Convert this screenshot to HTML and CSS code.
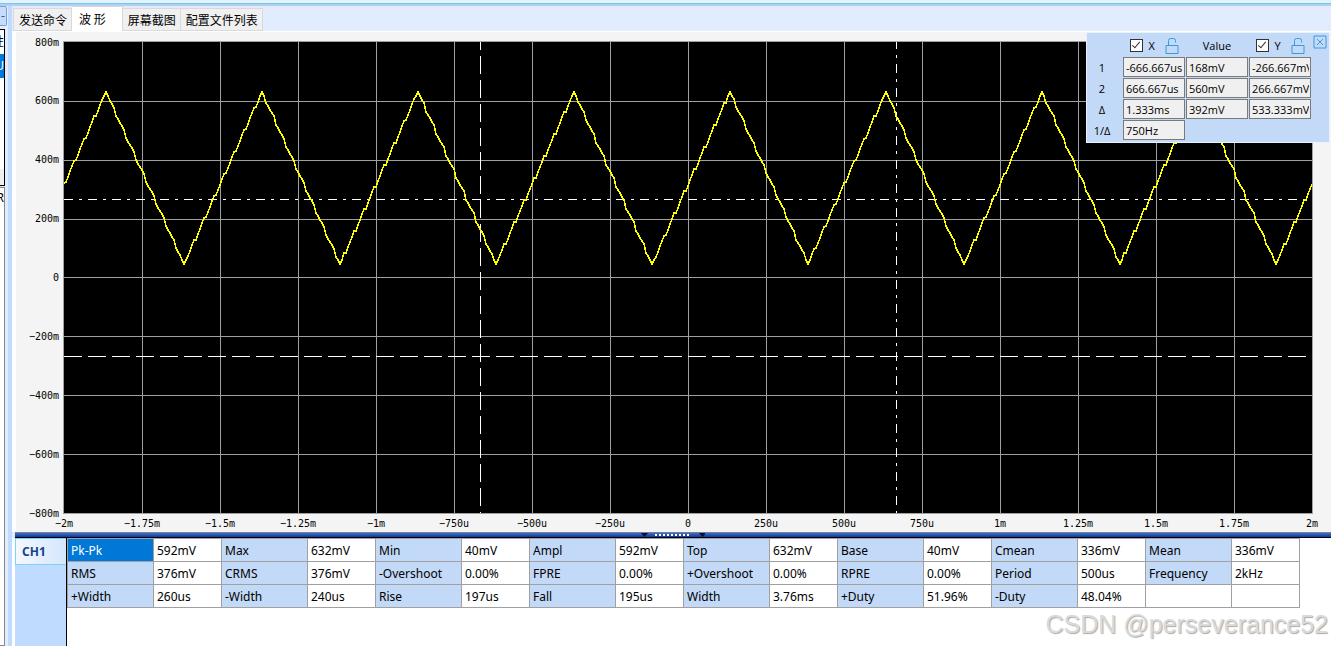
FILE: index.html
```html
<!DOCTYPE html>
<html lang="zh-CN">
<head>
    <meta charset="UTF-8">
    <title>波形</title>
    <link rel="stylesheet" href="styles.css">
</head>
<body>
<div class="topline"></div>
<div class="workspace">
    <aside class="sidebar">
        <button class="side-button" aria-label="-">-</button>
        <div class="side-list">
            <div class="side-item">性</div>
            <div class="side-item selected">U</div>
            <div class="side-space"></div>
        </div>
        <div class="side-log">R</div>
    </aside>
    <main>
        <nav class="tabs">
            <button>发送命令</button>
            <button class="active">波 形</button>
            <button>屏幕截图</button>
            <button>配置文件列表</button>
        </nav>
        <section class="scope">
            <div class="y-axis">
                <span>800m</span>
                <span>600m</span>
                <span>400m</span>
                <span>200m</span>
                <span>0</span>
                <span>−200m</span>
                <span>−400m</span>
                <span>−600m</span>
                <span>−800m</span>
            </div>
            <svg class="plot" viewBox="0 0 1248 471" preserveAspectRatio="none">
                <path class="grid" d="M78.5 0V471M156.5 0V471M234.5 0V471M312.5 0V471M390.5 0V471M468.5 0V471M546.5 0V471M624.5 0V471M702.5 0V471M780.5 0V471M858.5 0V471M936.5 0V471M1014.5 0V471M1092.5 0V471M1170.5 0V471M0 59.5H1248M0 118.5H1248M0 177.5H1248M0 235.5H1248M0 294.5H1248M0 353.5H1248M0 412.5H1248"/>
                <path class="cursor dash" d="M416.5 -10V471M0 314.5H1248"/>
                <path class="cursor dash-dot" d="M832.5 -2V471M0 157.5H1248"/>
                <polyline class="wave"/>
            </svg>
            <div class="x-axis">
                <span>−2m</span>
                <span>−1.75m</span>
                <span>−1.5m</span>
                <span>−1.25m</span>
                <span>−1m</span>
                <span>−750u</span>
                <span>−500u</span>
                <span>−250u</span>
                <span>0</span>
                <span>250u</span>
                <span>500u</span>
                <span>750u</span>
                <span>1m</span>
                <span>1.25m</span>
                <span>1.5m</span>
                <span>1.75m</span>
                <span>2m</span>
            </div>
        </section>
        <div class="splitter">
            <svg width="64" height="6" viewBox="0 0 64 6">
                <path d="M0 0H7L3.5 4ZM58 0H65L61.5 4Z" fill="#001040"/>
                <path d="M14 2H50" stroke="#fff" stroke-width="2" stroke-dasharray="2 2"/>
            </svg>
        </div>
        <section class="measure">
            <div class="channels">
                <button>CH1</button>
            </div>
            <div class="results">
                <table>
                    <tr>
                        <th class="selected">Pk-Pk</th><td>592mV</td>
                        <th>Max</th><td>632mV</td>
                        <th>Min</th><td>40mV</td>
                        <th>Ampl</th><td>592mV</td>
                        <th>Top</th><td>632mV</td>
                        <th>Base</th><td>40mV</td>
                        <th>Cmean</th><td>336mV</td>
                        <th>Mean</th><td>336mV</td>
                    </tr>
                    <tr>
                        <th>RMS</th><td>376mV</td>
                        <th>CRMS</th><td>376mV</td>
                        <th>-Overshoot</th><td>0.00%</td>
                        <th>FPRE</th><td>0.00%</td>
                        <th>+Overshoot</th><td>0.00%</td>
                        <th>RPRE</th><td>0.00%</td>
                        <th>Period</th><td>500us</td>
                        <th>Frequency</th><td>2kHz</td>
                    </tr>
                    <tr>
                        <th>+Width</th><td>260us</td>
                        <th>-Width</th><td>240us</td>
                        <th>Rise</th><td>197us</td>
                        <th>Fall</th><td>195us</td>
                        <th>Width</th><td>3.76ms</td>
                        <th>+Duty</th><td>51.96%</td>
                        <th>-Duty</th><td>48.04%</td>
                        <td></td><td></td>
                    </tr>
                </table>
            </div>
        </section>
    </main>
</div>

<div class="cursors">
    <span></span>
    <div class="head">
        <input type="checkbox" id="cursor-x" checked>
        <label for="cursor-x">X</label>
        <svg width="14" height="18" viewBox="0 0 14 18"><path d="M1 8.5H13V16.5H1ZM3.5 8.5V3.5Q3.5 1.5 5.5 1.5H8.5Q10.5 1.5 10.5 3.5V5.5"/></svg>
    </div>
    <div class="head">Value</div>
    <div class="head">
        <input type="checkbox" id="cursor-y" checked>
        <label for="cursor-y">Y</label>
        <svg width="14" height="18" viewBox="0 0 14 18"><path d="M1 8.5H13V16.5H1ZM3.5 8.5V3.5Q3.5 1.5 5.5 1.5H8.5Q10.5 1.5 10.5 3.5V5.5"/></svg>
    </div>
    <span class="name">1</span>
    <input type="text" aria-label="X1" value="-666.667us">
    <input type="text" aria-label="Value 1" value="168mV">
    <input type="text" aria-label="Y1" value="-266.667mV">
    <span class="name">2</span>
    <input type="text" aria-label="X2" value="666.667us">
    <input type="text" aria-label="Value 2" value="560mV">
    <input type="text" aria-label="Y2" value="266.667mV">
    <span class="name">Δ</span>
    <input type="text" aria-label="ΔX" value="1.333ms">
    <input type="text" aria-label="ΔValue" value="392mV">
    <input type="text" aria-label="ΔY" value="533.333mV">
    <span class="name">1/Δ</span>
    <input type="text" aria-label="1/ΔX" value="750Hz">
    <button class="close" aria-label="close">
        <svg width="14" height="14" viewBox="0 0 14 14"><path d="M1 1H13V13H1ZM4 4L10 10M10 4L4 10"/></svg>
    </button>
</div>
<div class="watermark">CSDN @perseverance52</div>
<script src="wave.js"></script>
</body>
</html>
```

FILE: wave.js
```js
// 2kHz triangle, 156 units per period, sampled in small quantised steps
const PERIOD = 156;
const PEAK_X = 42;
const TOP = 50;
const BOTTOM = 222;

const points = [];
for (let x = 0; x <= 1248; x += 2) {
    const phase = (x - PEAK_X + PERIOD) % PERIOD;
    const ramp = Math.abs(phase - PERIOD / 2) / (PERIOD / 2);
    const noise = ramp > 0.97 || ramp < 0.03 ? 0 : ((x * 7) % 5) - 2;
    const y = Math.round(BOTTOM - (BOTTOM - TOP) * ramp + noise);
    points.push(x + "," + y);
}
document.querySelector(".wave").setAttribute("points", points.join(" "));
```

FILE: styles.css
```css
html, body {
    margin: 0;
    height: 100%;
    overflow: hidden;
}

body {
    display: flex;
    flex-direction: column;
    position: relative;
    font-family: "Noto Sans", "Noto Sans CJK SC", sans-serif;
    font-size: 12px;
    color: #000;
    background: #E1EDFE;
}

button {
    font: inherit;
    margin: 0;
    padding: 0;
    border: none;
    background: none;
}

.topline {
    flex: none;
    height: 3px;
    background: #E3F3FD;
    border-bottom: 1px solid #72CBE2;
}

.workspace {
    flex: 1;
    display: flex;
    min-height: 0;
    border-top: 2px solid #B6CDF1;
}

/* left pane, collapsed to its right edge */
.sidebar {
    flex: none;
    display: flex;
    flex-direction: column;
    width: 8px;
    border-right: 4px solid #BFDBFF;
    overflow: hidden;
}

.side-button {
    width: 7px;
    height: 20px;
    border: 1px solid #7DA2CE;
    border-left: none;
    border-radius: 0 2px 2px 0;
    background: #C5DDFB;
    color: #1E5BB0;
    line-height: 16px;
}

.side-list {
    display: flex;
    flex-direction: column;
    width: 4px;
    height: 155px;
    margin-top: 3px;
    border: 1px solid #000;
    border-left: none;
    background: #FFF;
    overflow: hidden;
}

.side-item {
    display: flex;
    justify-content: flex-end;
    height: 24px;
    line-height: 24px;
}

.side-item.selected {
    background: #0078D7;
    color: #FFF;
}

.side-space {
    flex: 1;
    border-bottom: 16px solid #F0F0F0;
}

.side-log {
    flex: 1;
    display: flex;
    justify-content: flex-end;
    width: 4px;
    margin-top: 1px;
    border: 1px solid #888;
    border-left: none;
    background: #FFF;
    overflow: hidden;
    line-height: 20px;
}

main {
    flex: 1;
    display: flex;
    flex-direction: column;
    min-width: 0;
}

.tabs {
    display: flex;
    align-items: flex-end;
    height: 25px;
    padding-left: 1px;
}

.tabs button {
    height: 23px;
    padding: 0 4px 0 5px;
    border: 1px solid #D9D9D9;
    border-left: none;
    background: #F0F0F0;
    font-family: "Noto Sans CJK SC", sans-serif;
    line-height: 22px;
}

.tabs button:first-child {
    border-left: 1px solid #D9D9D9;
}

.tabs .active {
    height: 25px;
    padding: 0 16px 0 7px;
    border-bottom: none;
    background: #FFF;
}

.scope {
    flex: 1;
    display: grid;
    grid-template-columns: 48px 1fr;
    grid-template-rows: 1fr 19px;
    padding: 10px 19px 0 0;
    border-left: 4px solid #FFF;
    border-top: 1px solid #FFF;
    background: #F4F4F4;
    min-height: 0;
}

.y-axis, .x-axis {
    display: flex;
    justify-content: space-between;
    font: 10px "DejaVu Sans Mono", monospace;
}

.y-axis {
    flex-direction: column;
    align-items: flex-end;
    padding-right: 5px;
}

.y-axis span {
    display: flex;
    align-items: center;
    height: 0;
}

.x-axis {
    grid-column: 2;
    align-items: center;
    padding-top: 1px;
}

.x-axis span {
    display: flex;
    justify-content: center;
    width: 0;
    white-space: nowrap;
}

.plot {
    width: 100%;
    height: 100%;
    background: #000;
    outline: 1px solid #A0A0A0;
}

.plot path, .plot polyline {
    fill: none;
    shape-rendering: crispEdges;
}

.grid {
    stroke: #A0A0A0;
}

.cursor {
    stroke: #FFF;
}

.dash {
    stroke-dasharray: 18 6;
}

.dash-dot {
    stroke-dasharray: 9 6 3 6;
}

.plot .wave {
    stroke: #FF0;
    stroke-width: 1.5px;
}

.splitter {
    flex: none;
    display: flex;
    justify-content: center;
    height: 4px;
    margin-left: 3px;
    border-top: 1px solid #808080;
    border-bottom: 1px solid #000;
    background: linear-gradient(#3A6FD0, #0A3A9C);
}

.measure {
    flex: none;
    display: flex;
    height: 108px;
    border-left: 3px solid #FFF;
}

.channels {
    width: 51px;
    background: #BFDBFF;
}

.channels button {
    width: 100%;
    height: 27px;
    border: 1px solid #7FD5F0;
    border-right: none;
    background: linear-gradient(90deg, #F4F8FE, #D5E6FC);
    color: #15428B;
    font-weight: bold;
    text-align: left;
    padding-left: 6px;
}

.results {
    flex: 1;
    border-left: 1px solid #000;
    background: #FFF;
}

table {
    table-layout: fixed;
    width: 1233px;
    border-collapse: collapse;
}

th, td {
    box-sizing: border-box;
    width: 68px;
    height: 23px;
    padding: 1px 3px 0;
    border: 1px solid #A0A0A0;
    font-weight: normal;
    text-align: left;
    line-height: 21px;
}

th {
    width: 86px;
    background: #C2D9F7;
}

th.selected {
    background: #0078D7;
    color: #FFF;
}

/* floating cursor readout */
.cursors {
    position: absolute;
    top: 32px;
    right: 1px;
    display: grid;
    grid-template-columns: 30px 62px 62px 62px;
    grid-template-rows: 21px repeat(4, 20px);
    gap: 1px;
    padding: 2px 18px 2px 5px;
    border: 1px solid #E8F2FF;
    background: #C2D9F7;
    font-family: "Open Sans", sans-serif;
    font-size: 11px;
}

.head {
    display: flex;
    align-items: center;
    justify-content: center;
    gap: 6px;
}

.head label {
    width: 10px;
}

.name {
    display: flex;
    align-items: center;
    justify-content: center;
    padding-right: 10px;
}

.cursors input[type=text] {
    box-sizing: border-box;
    width: 100%;
    height: 20px;
    padding: 0 1px 0 2px;
    border: 1px solid #7A7A7A;
    background: #F0F0F0;
    font: inherit;
}

.cursors input[type=checkbox] {
    appearance: none;
    flex: none;
    box-sizing: border-box;
    width: 13px;
    height: 13px;
    margin: 0;
    border: 1px solid #333;
    background: #FFF;
    position: relative;
}

.cursors input[type=checkbox]:checked::after {
    content: "";
    position: absolute;
    left: 3px;
    top: 0;
    width: 3px;
    height: 7px;
    border: solid #333;
    border-width: 0 1px 1px 0;
    transform: rotate(40deg);
}

.cursors svg {
    flex: none;
    fill: none;
    stroke: #3A9BDC;
}

.close {
    position: absolute;
    top: 2px;
    right: 2px;
    width: 14px;
    height: 14px;
}

.close svg {
    display: block;
}

.watermark {
    position: absolute;
    right: 3px;
    bottom: 6px;
    font: 25px/32px "Liberation Sans", sans-serif;
    color: #DADADA;
    text-shadow: 1px 1px 1px #AAA;
}
```
